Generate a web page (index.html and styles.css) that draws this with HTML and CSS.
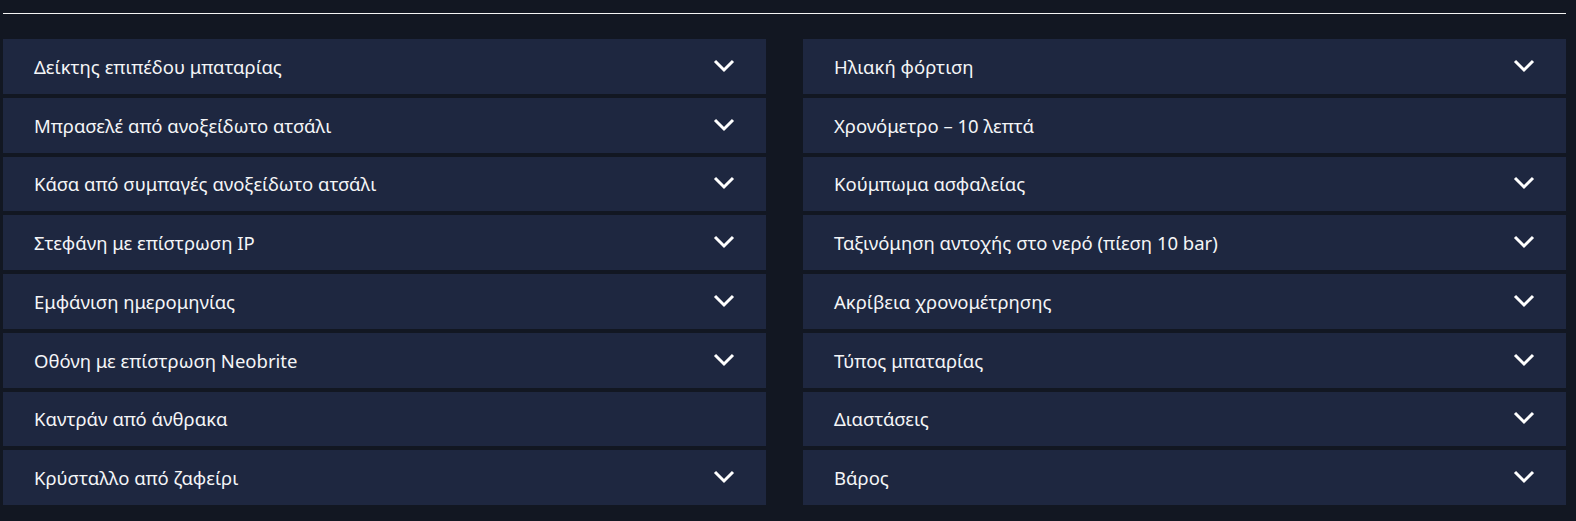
FILE: index.html
```html
<!DOCTYPE html>
<html lang="el">
<head>
    <meta charset="UTF-8">
    <meta name="viewport" content="width=device-width, initial-scale=1.0">
    <title>Χαρακτηριστικά</title>
    <link rel="stylesheet" href="styles.css">
</head>
<body>
    <div class="specs">
        <div class="divider"></div>
        <div class="columns">
            <div class="column">
                <div class="spec"><span>Δείκτης επιπέδου μπαταρίας</span><svg class="chev" viewBox="0 0 22 14"><path d="M2 2 L11 11 L20 2"/></svg></div>
                <div class="spec"><span>Μπρασελέ από ανοξείδωτο ατσάλι</span><svg class="chev" viewBox="0 0 22 14"><path d="M2 2 L11 11 L20 2"/></svg></div>
                <div class="spec"><span>Κάσα από συμπαγές ανοξείδωτο ατσάλι</span><svg class="chev" viewBox="0 0 22 14"><path d="M2 2 L11 11 L20 2"/></svg></div>
                <div class="spec"><span>Στεφάνη με επίστρωση IP</span><svg class="chev" viewBox="0 0 22 14"><path d="M2 2 L11 11 L20 2"/></svg></div>
                <div class="spec"><span>Εμφάνιση ημερομηνίας</span><svg class="chev" viewBox="0 0 22 14"><path d="M2 2 L11 11 L20 2"/></svg></div>
                <div class="spec"><span>Οθόνη με επίστρωση Neobrite</span><svg class="chev" viewBox="0 0 22 14"><path d="M2 2 L11 11 L20 2"/></svg></div>
                <div class="spec"><span>Καντράν από άνθρακα</span></div>
                <div class="spec"><span>Κρύσταλλο από ζαφείρι</span><svg class="chev" viewBox="0 0 22 14"><path d="M2 2 L11 11 L20 2"/></svg></div>
            </div>
            <div class="column">
                <div class="spec"><span>Ηλιακή φόρτιση</span><svg class="chev" viewBox="0 0 22 14"><path d="M2 2 L11 11 L20 2"/></svg></div>
                <div class="spec"><span>Χρονόμετρο – 10 λεπτά</span></div>
                <div class="spec"><span>Κούμπωμα ασφαλείας</span><svg class="chev" viewBox="0 0 22 14"><path d="M2 2 L11 11 L20 2"/></svg></div>
                <div class="spec"><span>Ταξινόμηση αντοχής στο νερό (πίεση 10 bar)</span><svg class="chev" viewBox="0 0 22 14"><path d="M2 2 L11 11 L20 2"/></svg></div>
                <div class="spec"><span>Ακρίβεια χρονομέτρησης</span><svg class="chev" viewBox="0 0 22 14"><path d="M2 2 L11 11 L20 2"/></svg></div>
                <div class="spec"><span>Τύπος μπαταρίας</span><svg class="chev" viewBox="0 0 22 14"><path d="M2 2 L11 11 L20 2"/></svg></div>
                <div class="spec"><span>Διαστάσεις</span><svg class="chev" viewBox="0 0 22 14"><path d="M2 2 L11 11 L20 2"/></svg></div>
                <div class="spec"><span>Βάρος</span><svg class="chev" viewBox="0 0 22 14"><path d="M2 2 L11 11 L20 2"/></svg></div>
            </div>
        </div>
    </div>
</body>
</html>
```

FILE: styles.css
```css
body {
    margin: 0;
    background: #121722;
    font-family: "Noto Sans", "Liberation Sans", sans-serif;
    color: #f4f5f7;
}
.specs {
    width: 1563px;
    padding: 13px 0 0 3px;
}
.divider {
    height: 1px;
    background: #f4f4f4;
}
.columns {
    display: grid;
    grid-template-columns: 763px 763px;
    column-gap: 37px;
    margin-top: 25px;
}
.column {
    display: flex;
    flex-direction: column;
    gap: 4px;
}
.spec {
    display: flex;
    align-items: center;
    justify-content: space-between;
    height: 54.75px;
    box-sizing: border-box;
    padding: 0 31px;
    background: #1e2740;
    font-size: 18.5px;
}
.chev {
    width: 22px;
    height: 14px;
    margin-top: -1px;
    fill: none;
    stroke: #ffffff;
    stroke-width: 3;
}
```
